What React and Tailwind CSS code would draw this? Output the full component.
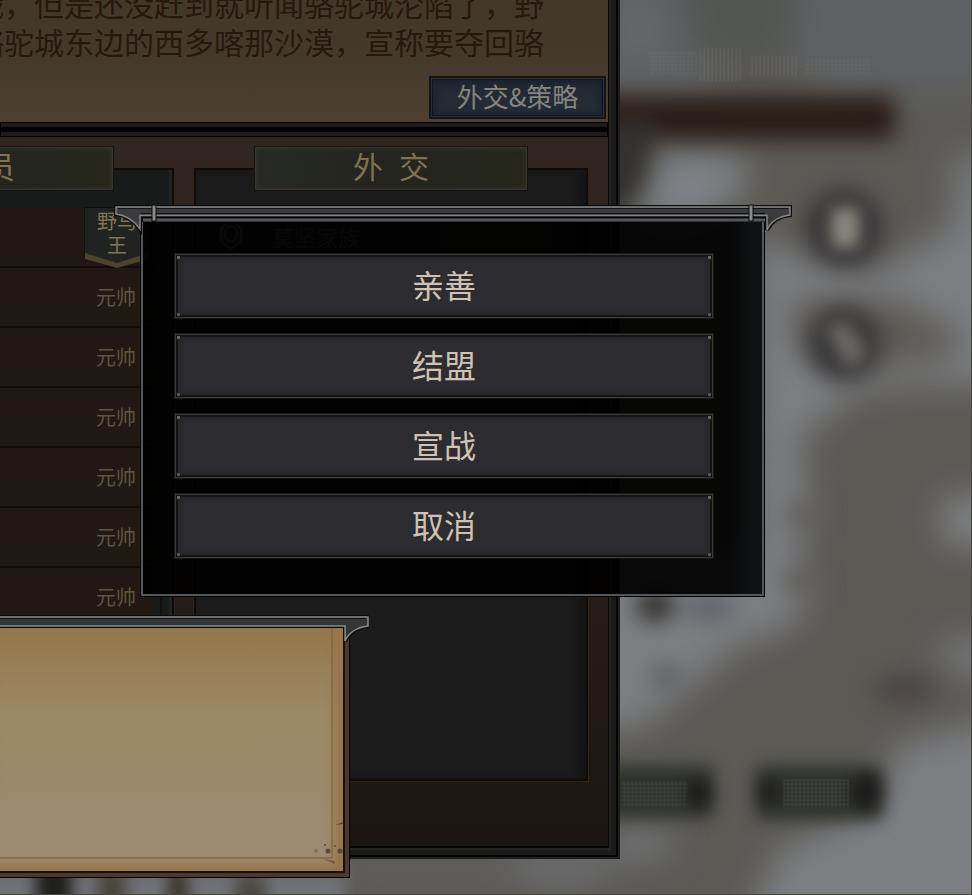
import React from "react";

const actions = ["亲善", "结盟", "宣战", "取消"];

const members = ["元帅", "元帅", "元帅", "元帅", "元帅", "元帅"];

const story = [
  "战，但是还没赶到就听闻骆驼城沦陷了，野",
  "骆驼城东边的西多喀那沙漠，宣称要夺回骆",
];

// Out of focus world map behind the windows
const MapBackground = () => (
  <svg
    className="absolute inset-0 h-full w-full"
    viewBox="0 0 972 895"
    preserveAspectRatio="xMaxYMin slice"
    aria-hidden="true"
  >
    <defs>
      <filter id="soft" x="-30%" y="-30%" width="160%" height="160%" colorInterpolationFilters="sRGB">
        <feGaussianBlur stdDeviation="17" />
      </filter>
      <filter id="softer" x="-30%" y="-30%" width="160%" height="160%" colorInterpolationFilters="sRGB">
        <feGaussianBlur stdDeviation="11" />
      </filter>
      <filter id="feather" x="-30%" y="-60%" width="160%" height="220%" colorInterpolationFilters="sRGB">
        <feGaussianBlur stdDeviation="8" />
      </filter>
      <filter id="haze" x="-20%" y="-20%" width="140%" height="140%" colorInterpolationFilters="sRGB">
        <feGaussianBlur stdDeviation="0.6" />
      </filter>
      <pattern id="vertical" width="4" height="4" patternUnits="userSpaceOnUse">
        <path d="M1 0V4" stroke="#9a9d9a" strokeWidth="1" />
      </pattern>
      <pattern id="mesh" width="4" height="4" patternUnits="userSpaceOnUse">
        <path d="M1 0V4M0 1H4" stroke="#7d8578" strokeWidth="1" />
      </pattern>
    </defs>
    <rect width="972" height="895" fill="#5c5a55" />
    <g filter="url(#soft)">
      <path d="M560 -60H1040V95H830L740 20L700 100H560Z" fill="#5e6063" />
      <ellipse cx="640" cy="30" rx="22" ry="30" fill="#66696b" />
      <path d="M670 -60H800L790 60H700Z" fill="#535552" />
      <path d="M660 150L740 155L750 185L700 225L640 225Z" fill="#7e8388" />
      <path d="M955 155H1040V240H950Z" fill="#75787b" />
      <path
        d="M755 235L800 255L870 275L960 225L1040 215V385L920 385L860 390L800 440L810 500L800 560L810 605L780 635L740 645L690 690L640 730L560 730V560H755Z"
        fill="#7c7e82"
      />
      <path d="M790 300H900L965 335L950 360L860 370L800 350Z" fill="#5d5a54" />
      <path d="M940 500L1040 490V545L945 545Z" fill="#808286" />
      <path d="M940 640H1040V690L945 670Z" fill="#75787b" />
      <path d="M1040 710L900 745L870 810L780 850L730 960H1040Z" fill="#7c7e82" />
      <ellipse cx="640" cy="845" rx="34" ry="14" fill="#777a7e" />
      <rect x="340" y="855" width="280" height="24" fill="#606060" />
      <ellipse cx="560" cy="870" rx="50" ry="14" fill="#727479" />
    </g>
    <g filter="url(#softer)">
      <rect x="560" y="96" width="336" height="44" rx="6" fill="#2a1c16" />
      <path d="M590 120H658L645 180L622 215H590Z" fill="#333130" />
      <circle cx="845" cy="228" r="39" fill="#363537" />
      <circle cx="845" cy="344" r="38" fill="#3a393a" />
      <ellipse cx="656" cy="606" rx="19" ry="16" fill="#302d29" />
      <ellipse cx="710" cy="608" rx="24" ry="14" fill="#5f6467" />
      <ellipse cx="667" cy="678" rx="16" ry="13" fill="#5f6064" />
      <ellipse cx="806" cy="515" rx="20" ry="11" fill="#605e5a" />
      <ellipse cx="803" cy="582" rx="20" ry="12" fill="#605e5a" />
      <ellipse cx="905" cy="690" rx="32" ry="15" fill="#4c4543" />
    </g>
    <g filter="url(#feather)">
      <rect x="832" y="208" width="28" height="40" fill="#8d8881" />
      <path d="M826 328L848 322L868 354L850 370Z" fill="#6c6a66" />
      <rect x="570" y="766" width="145" height="53" rx="8" fill="#30332d" />
      <rect x="755" y="766" width="130" height="55" rx="10" fill="#30332d" />
      <circle cx="700" cy="794" r="15" fill="#1c1c1c" />
      <circle cx="769" cy="793" r="13" fill="#1e1e1e" />
      <circle cx="868" cy="793" r="18" fill="#1c1c1c" />
      <rect x="-20" y="872" width="366" height="50" fill="#707276" />
      <rect x="36" y="866" width="36" height="50" fill="#1e1e1c" />
      <rect x="98" y="872" width="28" height="50" fill="#48443d" />
      <rect x="168" y="872" width="20" height="50" fill="#38342c" />
      <rect x="236" y="876" width="30" height="50" fill="#4a4843" />
    </g>
    <g opacity="0.2" filter="url(#haze)">
      <rect x="700" y="48" width="42" height="34" fill="url(#vertical)" />
      <rect x="650" y="52" width="48" height="24" fill="url(#mesh)" />
      <rect x="750" y="56" width="48" height="20" fill="url(#vertical)" />
      <rect x="806" y="58" width="66" height="18" fill="url(#mesh)" />
      <rect x="622" y="782" width="66" height="26" fill="url(#mesh)" />
      <rect x="784" y="780" width="66" height="28" fill="url(#mesh)" />
    </g>
  </svg>
);

const Plaque = ({ first, second }) => (
  <h2 className="relative z-10 -mb-[22px] flex h-[43px] w-[272px] items-center justify-center gap-4 self-center border border-[#36362a] bg-gradient-to-r from-[#272a24] via-[#23241d] to-[#27281b] pb-2 text-[30px] leading-none text-[#7e7254] shadow-[0_0_0_1px_#15130f,inset_0_0_5px_#35352a]">
    <span>{first}</span>
    <span>{second}</span>
  </h2>
);

const StoryBox = () => (
  <header className="overflow-hidden bg-gradient-to-b from-[#43372a] via-[#45392b] to-[#4d4030]">
    <div className="flex flex-col items-end pr-16 text-[30px] leading-[38px] text-[#27170d]">
      {story.map((line, i) => (
        <p key={i} className={i === 0 ? "-mt-4 whitespace-nowrap" : "whitespace-nowrap"}>
          {line}
        </p>
      ))}
    </div>
    <div className="flex justify-end pt-4 pr-0.5 pb-[3px]">
      <button className="h-[43px] w-[177px] border-4 border-[#12151a] bg-gradient-to-b from-[#202833] to-[#262d37] pb-1 text-[26px] leading-none text-[#85847f] shadow-[inset_0_0_8px_#161d28] outline-1 -outline-offset-3 outline-[#2a2e33]">
        外交&amp;策略
      </button>
    </div>
  </header>
);

const MemberList = () => (
  <section className="flex w-[394px] shrink-0 flex-col">
    <Plaque first="成" second="员" />
    <div className="grow border-2 border-[#0d0c0b] bg-[#191a1a] pt-[37px] pr-2.5 shadow-[0_0_0_1px_#30241e,inset_-3px_0_0_#202324]">
      <ul className="border-r-2 border-[#11100f] pr-1.5">
        <li className="flex h-[61px] justify-end border-b-2 border-[#120c08] bg-[#1f1814] pr-1">
          <div className="relative h-[63px] w-[66px]">
            <svg className="absolute inset-0" viewBox="0 0 66 63" aria-hidden="true">
              <path d="M0 0H66V50L33 61L0 50Z" fill="#20231f" stroke="#11120f" strokeWidth="2" />
              <path d="M1 46L33 56L65 46V52L33 61L1 52Z" fill="#4b452f" />
            </svg>
            <p className="relative pt-0.5 text-center text-[20px] leading-6 text-[#7d7657]">
              野马
              <br />王
            </p>
          </div>
        </li>
        {members.map((rank, i) => (
          <li
            key={i}
            className="flex h-[60px] items-center justify-end border-b-2 border-[#120c07] bg-gradient-to-b from-[#201814] to-[#1f1914] pr-[18px] text-[20px] text-[#5d563e]"
          >
            {rank}
          </li>
        ))}
      </ul>
    </div>
  </section>
);

const DiplomacyList = () => (
  <section className="flex w-[394px] shrink-0 flex-col">
    <Plaque first="外" second="交" />
    <div className="min-h-[613px] grow border-2 border-[#0d0c0b] bg-[#1a1b1a] pt-[51px] shadow-[0_0_0_1px_#30241e,inset_-8px_0_6px_#151515]">
      <div className="flex items-center gap-7 pr-8 pl-[22px] text-[22px] leading-7 text-[#5c5c5c]">
        <svg width="26" height="30" viewBox="0 0 26 30" fill="none" stroke="#666666" strokeWidth="3" aria-hidden="true">
          <path d="M8 3L3 8V20L13 28L23 20V8L18 3" />
          <ellipse cx="13" cy="13" rx="6" ry="8" />
        </svg>
        <span>莫坚家族</span>
        <div className="ml-auto h-5 w-28 bg-[#2e2d18]" />
      </div>
    </div>
  </section>
);

const KingdomPanel = () => (
  <main className="relative min-w-0 flex-1 self-start overflow-hidden bg-[#171716] pr-3 pb-3.5 shadow-[inset_-2px_-2px_0_#1e1e1e,inset_-4px_-4px_0_#060606,inset_-9px_-9px_0_#1a1a1a,inset_-11px_-11px_0_#262523,inset_-12px_-13px_0_#080706]">
    <StoryBox />
    <div className="h-[15px] border-y-[5px] border-[#1b1c1b] bg-black outline-1 -outline-offset-1 outline-black" />
    <div className="flex justify-end gap-5 bg-gradient-to-b from-[#30251f] via-[#291f1b] to-[#1b1611] pt-2.5 pr-5 pb-16">
      <MemberList />
      <DiplomacyList />
    </div>
  </main>
);

const DialogTrim = () => (
  <svg
    className="pointer-events-none absolute -top-[3px] -left-7"
    width="682"
    height="32"
    viewBox="0 0 682 32"
    aria-hidden="true"
  >
    <rect x="29" y="12" width="624" height="6" fill="#0a0a0a" />
    <path d="M30 16H653" stroke="#55585a" strokeWidth="3" />
    <path
      d="M3 3H677V11Q660 13 654 26V11.500H27V25Q18 12 3 10Z"
      fill="#3b3b3e"
      stroke="#0b0b0b"
      strokeWidth="4"
    />
    <path
      d="M3 3H677V11Q660 13 654 26V11.500H27V25Q18 12 3 10Z"
      fill="#3b3b3e"
      stroke="#868888"
      strokeWidth="1.500"
    />
    <path d="M5 4.500H675" stroke="#121212" />
    <path d="M28 9.500H652" stroke="#121212" />
    <rect x="39" y="1" width="4" height="16" fill="#8a8b8b" stroke="#0a0a0a" />
    <rect x="636" y="1" width="4" height="16" fill="#8a8b8b" stroke="#0a0a0a" />
  </svg>
);

const ActionButton = ({ label }) => (
  <button className="relative h-[66px] w-full border border-[#1a1918] bg-[#2d2c30] pb-1 text-[32px] leading-none text-[#cec3b4] shadow-[inset_0_0_0_1px_#3a3936,inset_0_0_0_3px_#151415,inset_0_0_9px_#161517]">
    {label}
    <span className="absolute top-0.5 left-0.5 size-[3px] bg-[#66635b]" />
    <span className="absolute top-0.5 right-0.5 size-[3px] bg-[#66635b]" />
    <span className="absolute bottom-0.5 left-0.5 size-[3px] bg-[#55534e]" />
    <span className="absolute right-0.5 bottom-0.5 size-[3px] bg-[#55534e]" />
  </button>
);

const DiplomacyDialog = () => (
  <div
    role="dialog"
    aria-label="外交"
    className="absolute top-[206px] left-[140px] w-[625px] border border-black"
  >
    <div className="flex flex-col gap-3.5 border-2 border-[#55585a] bg-black/92 bg-gradient-to-r from-transparent from-95% to-[#0f1112] to-98% pt-11 pr-12 pb-[35px] pl-[31px]">
      {actions.map((label) => (
        <ActionButton key={label} label={label} />
      ))}
    </div>
    <DialogTrim />
  </div>
);

const ParchmentWindow = () => (
  <div className="absolute top-[626px] left-0 w-[350px] border-r border-b border-black bg-[#4b392f] pr-1 pb-1">
    <div className="h-[247px] border-r-2 border-b-2 border-[#16100b] bg-gradient-to-b from-[#967649] via-[#9b8865] via-35% to-[#9e8a72] pr-2.5 pb-3 shadow-[inset_-8px_-7px_8px_#96764c]">
      <div className="h-full border-r-2 border-b-2 border-[#826540]/70" />
    </div>
    <svg className="absolute right-0 bottom-1.5" width="42" height="62" viewBox="0 0 42 62" aria-hidden="true">
      <g fill="#5e4936">
        <circle cx="9" cy="42" r="2" opacity="0.4" />
        <circle cx="21" cy="42" r="2.500" />
        <circle cx="33" cy="42" r="2.500" />
        <path d="M28 16L36 13V15Z" />
        <path d="M16 50L28 52V55Z" opacity="0.7" />
        <circle cx="18" cy="36" r="1" />
        <circle cx="28" cy="37" r="1" />
      </g>
    </svg>
    <svg className="absolute -top-3 -right-5" width="372" height="30" viewBox="0 0 372 30" aria-hidden="true">
      <path
        d="M-4 3H371V12Q354 14 348 27V12H-4Z"
        fill="#333536"
        stroke="#0b0b0b"
        strokeWidth="4"
      />
      <path
        d="M-4 3H371V12Q354 14 348 27V12H-4Z"
        fill="#333536"
        stroke="#8b8d8b"
        strokeWidth="1.500"
      />
      <path d="M0 4.500H369" stroke="#101010" />
    </svg>
  </div>
);

export default function App() {
  return (
    <div className="relative flex min-h-screen overflow-hidden border-r border-b border-[#45443f] bg-[#5c5a55] font-['Noto_Sans_CJK_SC',sans-serif]">
      <MapBackground />
      <KingdomPanel />
      {/* keeps the map visible beside the kingdom window */}
      <div className="w-[351px] shrink-0" />
      <ParchmentWindow />
      <DiplomacyDialog />
    </div>
  );
}
